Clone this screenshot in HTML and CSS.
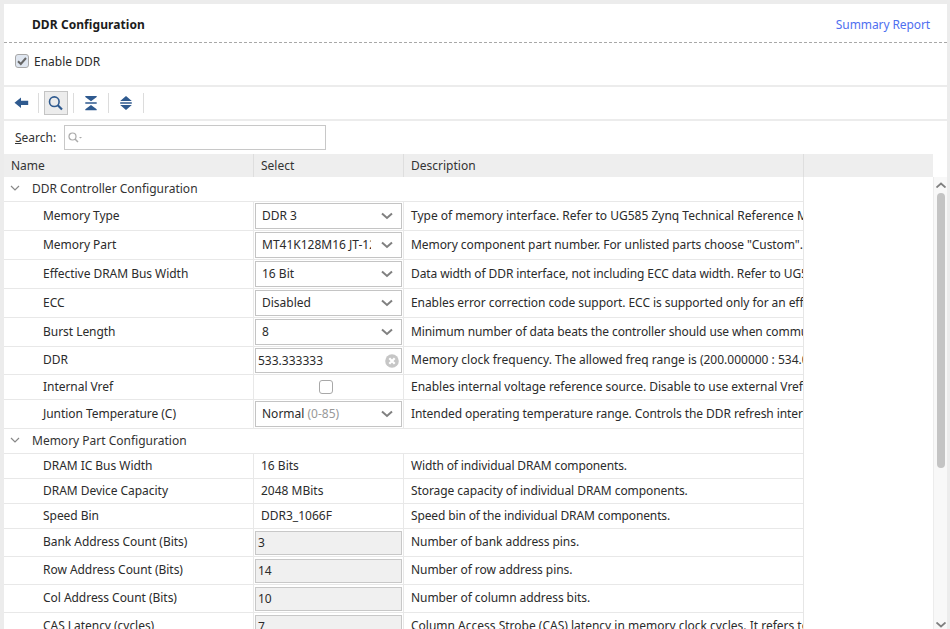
FILE: index.html
```html
<!DOCTYPE html>
<html lang="en">
<head>
<meta charset="utf-8">
<title>DDR Configuration</title>
<link rel="stylesheet" href="styles.css">
</head>
<body>
<div class="window">
  <header class="title-bar">
    <h1 class="title">DDR Configuration</h1>
    <a class="link">Summary Report</a>
  </header>
  <section class="enable-bar">
    <span class="check checked"><svg width="14" height="14" viewBox="0 0 14 14"><path d="M3 7.200l2.800 2.800L11 4" fill="none" stroke="#666" stroke-width="2"/></svg></span>
    <span>Enable DDR</span>
  </section>
  <nav class="toolbar">
    <span class="tool tool-back"><svg width="16" height="12" viewBox="0 0 16 12"><path d="M0.500 5.800l6.500-5.300v3.300h7.200v4.200h-7.200v3.100z" fill="#2f5a8f"/></svg></span>
    <span class="sep"></span>
    <span class="tool tool-active"><svg width="18" height="18" viewBox="0 0 18 18"><circle cx="7.300" cy="7.700" r="4.800" fill="none" stroke="#2f5a8f" stroke-width="1.600"/><path d="M10.800 11.300l4.200 4.200" stroke="#2f5a8f" stroke-width="2.200"/></svg></span>
    <span class="sep"></span>
    <span class="tool"><svg width="14" height="16" viewBox="0 0 14 16"><path d="M1.300 1h11.400v1l-5.700 4.200-5.700-4.200zM1.300 7.200h11.400v1.500h-11.400zM7 10l5.700 4.200v1h-11.400v-1z" fill="#2f5a8f"/></svg></span>
    <span class="sep"></span>
    <span class="tool"><svg width="14" height="16" viewBox="0 0 14 16"><path d="M1.200 6l5.800-5 5.800 5zM1.200 7.200h11.600v1.600h-11.600zM1.200 10h11.600l-5.800 5z" fill="#2f5a8f"/></svg></span>
    <span class="sep"></span>
  </nav>
  <section class="search-bar">
    <label class="search-label"><u>S</u>earch:</label>
    <div class="search-input"><svg width="16" height="12" viewBox="0 0 16 12"><circle cx="4.500" cy="4.500" r="3.500" fill="none" stroke="#aaa" stroke-width="1.200"/><path d="M7 7l3 3" stroke="#aaa" stroke-width="1.500"/><path d="M11 5h3l-1.500 1.500z" fill="#aaa"/></svg></div>
  </section>
  <div class="table-head">
    <div class="th th-name">Name</div>
    <div class="th th-select">Select</div>
    <div class="th th-desc">Description</div>
    <div class="th-rest"></div>
  </div>
  <div class="table-area">
    <div class="table-body">
      <div class="group"><svg class="caret" width="10" height="6" viewBox="0 0 10 6"><path d="M1 1l4 4 4-4" fill="none" stroke="#888" stroke-width="1.200"/></svg>DDR Controller Configuration</div>

      <div class="row h29"><div class="c-name">Memory Type</div><div class="c-sel"><div class="dropdown"><span class="dd-text">DDR 3</span><svg class="chev" width="12" height="8" viewBox="0 0 12 8"><path d="M1 1.500l5 4.500 5-4.500" fill="none" stroke="#808080" stroke-width="2"/></svg></div></div><div class="c-desc loose">Type of memory interface. Refer to UG585 Zynq Technical Reference Manual</div></div>

      <div class="row h29"><div class="c-name">Memory Part</div><div class="c-sel"><div class="dropdown"><span class="dd-text">MT41K128M16 JT-125</span><svg class="chev" width="12" height="8" viewBox="0 0 12 8"><path d="M1 1.500l5 4.500 5-4.500" fill="none" stroke="#808080" stroke-width="2"/></svg></div></div><div class="c-desc">Memory component part number. For unlisted parts choose "Custom". Refer to the manual</div></div>

      <div class="row h29"><div class="c-name">Effective DRAM Bus Width</div><div class="c-sel"><div class="dropdown"><span class="dd-text">16 Bit</span><svg class="chev" width="12" height="8" viewBox="0 0 12 8"><path d="M1 1.500l5 4.500 5-4.500" fill="none" stroke="#808080" stroke-width="2"/></svg></div></div><div class="c-desc snug">Data width of DDR interface, not including ECC data width. Refer to UG585 for details</div></div>

      <div class="row h29"><div class="c-name">ECC</div><div class="c-sel"><div class="dropdown"><span class="dd-text">Disabled</span><svg class="chev" width="12" height="8" viewBox="0 0 12 8"><path d="M1 1.500l5 4.500 5-4.500" fill="none" stroke="#808080" stroke-width="2"/></svg></div></div><div class="c-desc">Enables error correction code support. ECC is supported only for an effective width of 16</div></div>

      <div class="row h29"><div class="c-name">Burst Length</div><div class="c-sel"><div class="dropdown"><span class="dd-text">8</span><svg class="chev" width="12" height="8" viewBox="0 0 12 8"><path d="M1 1.500l5 4.500 5-4.500" fill="none" stroke="#808080" stroke-width="2"/></svg></div></div><div class="c-desc snug">Minimum number of data beats the controller should use when communicating with memory</div></div>

      <div class="row h28"><div class="c-name">DDR</div><div class="c-sel"><div class="textbox"><span>533.333333</span><svg width="14" height="14" viewBox="0 0 14 14"><circle cx="7" cy="7" r="6.800" fill="#c6c6c6"/><path d="M4.300 4.300l5.400 5.400M9.700 4.300l-5.400 5.400" stroke="#fff" stroke-width="2.200"/></svg></div></div><div class="c-desc loose">Memory clock frequency. The allowed freq range is (200.000000 : 534.000000) MHz for this part</div></div>

      <div class="row h25"><div class="c-name">Internal Vref</div><div class="c-sel c-center"><span class="check"></span></div><div class="c-desc slight">Enables internal voltage reference source. Disable to use external Vref pins on the device</div></div>

      <div class="row h29"><div class="c-name">Juntion Temperature (C)</div><div class="c-sel"><div class="dropdown"><span class="dd-text">Normal <span class="muted">(0-85)</span></span><svg class="chev" width="12" height="8" viewBox="0 0 12 8"><path d="M1 1.500l5 4.500 5-4.500" fill="none" stroke="#808080" stroke-width="2"/></svg></div></div><div class="c-desc">Intended operating temperature range. Controls the DDR refresh interval used by the part</div></div>

      <div class="group"><svg class="caret" width="10" height="6" viewBox="0 0 10 6"><path d="M1 1l4 4 4-4" fill="none" stroke="#888" stroke-width="1.200"/></svg>Memory Part Configuration</div>

      <div class="row h25"><div class="c-name">DRAM IC Bus Width</div><div class="c-val">16 Bits</div><div class="c-desc tight">Width of individual DRAM components.</div></div>
      <div class="row h25"><div class="c-name">DRAM Device Capacity</div><div class="c-val">2048 MBits</div><div class="c-desc">Storage capacity of individual DRAM components.</div></div>
      <div class="row h25"><div class="c-name">Speed Bin</div><div class="c-val">DDR3_1066F</div><div class="c-desc tight">Speed bin of the individual DRAM components.</div></div>
      <div class="row h28"><div class="c-name">Bank Address Count (Bits)</div><div class="c-sel"><div class="readonly">3</div></div><div class="c-desc">Number of bank address pins.</div></div>
      <div class="row h28"><div class="c-name">Row Address Count (Bits)</div><div class="c-sel"><div class="readonly">14</div></div><div class="c-desc">Number of row address pins.</div></div>
      <div class="row h28"><div class="c-name">Col Address Count (Bits)</div><div class="c-sel"><div class="readonly">10</div></div><div class="c-desc">Number of column address bits.</div></div>
      <div class="row h28"><div class="c-name">CAS Latency (cycles)</div><div class="c-sel"><div class="readonly">7</div></div><div class="c-desc loose">Column Access Strobe (CAS) latency in memory clock cycles. It refers to the delay</div></div>
    </div>
    <div class="blank"></div>
    <div class="scrollbar">
      <svg class="sb-arrow" width="10" height="6" viewBox="0 0 10 6"><path d="M0.500 5.500l4.500-4 4.500 4" fill="none" stroke="#808080" stroke-width="1.800"/></svg>
      <div class="sb-thumb"></div>
      <svg class="sb-arrow sb-down" width="10" height="6" viewBox="0 0 10 6"><path d="M0.500 0.500l4.500 4 4.500-4" fill="none" stroke="#808080" stroke-width="1.800"/></svg>
    </div>
  </div>
</div>
</body>
</html>
```
FILE: styles.css
```css
* { box-sizing: border-box; }
html, body { margin: 0; height: 100%; overflow: hidden; }
body {
  background: #ececec;
  font-family: "Noto Sans", sans-serif;
  font-size: 12px;
  color: #2b2b2b;
}
.window { height: 629px; padding: 4px 3px 0 4px; display: flex; flex-direction: column; overflow: hidden; }
.title-bar {
  height: 39px; flex: none; background: #fff;
  display: flex; align-items: center; justify-content: space-between;
  padding: 2px 17px 0 28px;
  border-bottom: 1px dashed #a8a8a8;
}
.title { margin: 0; font-size: 12px; font-weight: 700; color: #1c1c1c; letter-spacing: 0.08px; }
.link { color: #4f6ff0; letter-spacing: -0.1px; }
.enable-bar {
  height: 42px; flex: none; background: #fff;
  display: flex; align-items: center; gap: 5px;
  padding: 0 0 6px 11px;
}
.check {
  display: block; width: 14px; height: 14px; flex: none;
  border: 1.500px solid #a8a8a8; border-radius: 3px; background: #fff;
}
.check.checked { background: #dfe6f0; position: relative; }
.check.checked svg { position: absolute; left: -1.500px; top: -1.500px; }
.toolbar {
  height: 32px; flex: none; margin-top: 2px; background: #fff;
  display: flex; align-items: center; padding-left: 10px;
}
.tool { width: 24px; height: 24px; margin: 0 5px; display: flex; align-items: center; justify-content: center; flex: none; }
.tool-back { justify-content: flex-start; margin: 0; }
.tool-active { border: 1px solid #c4c4c4; background: #ececec; }
.sep { width: 1px; height: 20px; background: #dcdcdc; flex: none; }
.search-bar {
  height: 33px; flex: none; margin-top: 2px; background: #fff;
  display: flex; align-items: center; padding: 0 0 0 11px; gap: 6px;
}
.search-label { width: 43px; flex: none; color: #333; }
.search-input {
  width: 262px; height: 25px; border: 1px solid #c8c8c8; background: #fff;
  display: flex; align-items: center; padding-left: 3px;
}
.table-head { height: 23px; flex: none; display: flex; background: #fff; }
.th {
  display: flex; align-items: center; background: #eeeeee;
  border-right: 1px solid #dedede; height: 23px; flex: none; color: #333;
}
.th-name { width: 250px; padding-left: 7px; }
.th-select { width: 150px; padding-left: 7px; }
.th-desc { width: 400px; padding-left: 7px; }
.th-rest { width: 129px; background: #eeeeee; flex: none; }
.table-area { flex: 1; min-height: 0; display: flex; background: #fff; overflow: hidden; }
.table-body { width: 800px; flex: none; border-right: 1px solid #e6e6e6; }
.blank { width: 129px; flex: none; }
.scrollbar {
  width: 14px; flex: none; background: #f8f8f8; border-left: 1px solid #ececec;
  display: flex; flex-direction: column; align-items: center;
  padding-top: 5px;
}
.sb-thumb { width: 8px; height: 275px; margin-top: 5px; background: #c4c4c4; border-radius: 4px; flex: none; }
.sb-arrow { flex: none; }
.sb-down { margin-top: 154px; }
.group {
  height: 25px; display: flex; align-items: center; padding: 0 0 2px 6px;
  border-bottom: 1px solid #e8e8e8; color: #333;
}
.caret { margin-right: 12px; flex: none; }
.row {
  display: grid; grid-template-columns: 250px 150px 399px;
  border-bottom: 1px solid #e8e8e8;
}
.h29 { height: 29px; }
.h28 { height: 28px; }
.h25 { height: 25px; }
.c-name { display: flex; align-items: center; padding: 0 0 2px 39px; border-right: 1px solid #e8e8e8; white-space: nowrap; letter-spacing: -0.04px; }
.c-sel { display: flex; align-items: center; padding: 0 1px; border-right: 1px solid #e8e8e8; min-width: 0; }
.c-center { justify-content: center; padding-right: 7px; }
.c-val { display: flex; align-items: center; padding: 0 0 2px 7px; border-right: 1px solid #e8e8e8; }
.c-desc { padding: 0 0 2px 7px; white-space: nowrap; overflow: hidden; display: flex; align-items: center; letter-spacing: -0.07px; }
.loose { letter-spacing: 0; }
.slight { letter-spacing: -0.03px; }
.snug { letter-spacing: -0.1px; }
.tight { letter-spacing: -0.13px; }
.dropdown {
  width: 147px; height: 26px; border: 1px solid #c4c4c4; background: #fff;
  display: flex; align-items: center; padding: 0 8px 0 6px;
}
.dd-text { flex: 1; min-width: 0; overflow: hidden; white-space: nowrap; margin-right: 10px; padding-bottom: 2px; }
.muted { color: #999; }
.chev { flex: none; }
.textbox {
  width: 147px; height: 25px; border: 1px solid #c4c4c4; background: #fff;
  display: flex; align-items: center; justify-content: space-between; padding: 0 2px 0 2px;
}
.readonly {
  width: 147px; height: 24px; border: 1px solid #c8c8c8; background: #f0f0f0;
  display: flex; align-items: center; padding-left: 2px;
}
```
